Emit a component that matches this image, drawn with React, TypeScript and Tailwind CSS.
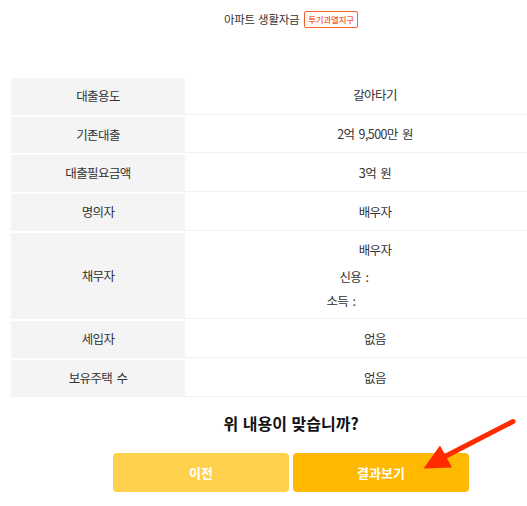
import React from 'react';

const rows: { label: string; value: React.ReactNode; tall?: boolean }[] = [
  { label: '대출용도', value: '갈아타기' },
  { label: '기존대출', value: '2억 9,500만 원' },
  { label: '대출필요금액', value: '3억 원' },
  { label: '명의자', value: '배우자' },
  {
    label: '채무자',
    tall: true,
    value: (
      <div className="flex flex-col items-center">
        <div className="leading-6 mb-[3px]">배우자</div>
        <div className="leading-6">
          신용 : <span className="inline-block w-[38px] text-transparent">850</span>
        </div>
        <div className="leading-6">
          소득 : <span className="inline-block w-[64px] text-transparent">5000</span>
        </div>
      </div>
    ),
  },
  { label: '세입자', value: '없음' },
  { label: '보유주택 수', value: '없음' },
];

export default function App() {
  return (
    <div
      className="relative w-full h-[506px] overflow-hidden bg-white text-[#333]"
      style={{ fontFamily: '"Noto Sans CJK KR", "Noto Sans", sans-serif' }}
    >
      <div className="w-[582px]">
        {/* header */}
        <div className="pt-[11px] flex items-center justify-center gap-[5px] h-[28px]">
          <span className="text-[11.5px] tracking-[-0.3px] leading-[17px] [word-spacing:1px]">아파트 생활자금</span>
          <span className="h-[17px] px-[3px] flex items-center border border-[#f2622e] rounded-[2px] text-[#f2622e] text-[8.5px] font-medium tracking-[-0.2px]">
            투기과열지구
          </span>
        </div>

        {/* summary table */}
        <div className="mt-[50px] ml-[11px] w-[554px] text-[12.5px] tracking-[-0.6px] [word-spacing:2px]">
          {rows.map((r) => (
            <div key={r.label} className="flex mb-[2px]">
              <div
                className={`w-[174px] shrink-0 bg-[#f4f4f4] flex items-center justify-center ${
                  r.tall ? 'h-[86.7px]' : 'h-[36.7px]'
                }`}
              >
                {r.label}
              </div>
              <div className="flex-1 flex items-center justify-center border-b border-[#f1f1f1]">
                {r.value}
              </div>
            </div>
          ))}
        </div>

        {/* confirm */}
        <div className="mt-[14px] text-center text-[16px] font-bold text-[#111] leading-6 [word-spacing:1px]">
          위 내용이 맞습니까?
        </div>
        <div className="mt-[18px] flex justify-center gap-[4px]">
          <button className="w-[176px] h-[39px] rounded-[4px] bg-[#ffd04b] text-white text-[13px] font-bold">
            이전
          </button>
          <button className="w-[176px] h-[39px] rounded-[4px] bg-[#ffb900] text-white text-[13px] font-bold">
            결과보기
          </button>
        </div>
      </div>

      {/* annotation arrow */}
      <svg className="absolute left-0 top-0 pointer-events-none" width="527" height="506">
        <line x1="513" y1="421.5" x2="442" y2="458" stroke="#ff2a00" strokeWidth="5" strokeLinecap="round" />
        <polygon points="423.5,468.5 440,445.5 452,467.5" fill="#ff2a00" />
      </svg>
    </div>
  );
}
